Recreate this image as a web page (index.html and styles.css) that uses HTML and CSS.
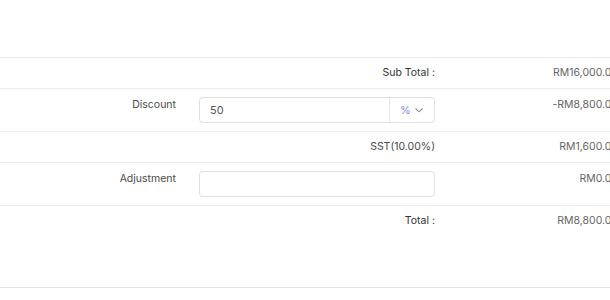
FILE: index.html
```html
<!DOCTYPE html>
<html lang="en">
<head>
  <meta charset="UTF-8" />
  <meta name="viewport" content="width=device-width, initial-scale=1.0" />
  <title>Totals</title>
  <link rel="stylesheet" href="styles.css">
</head>
<body>
  <section class="totals">
    <div class="row">
      <div class="label wide strong">Sub Total :</div>
      <div class="value">RM16,000.00</div>
    </div>

    <div class="row tall">
      <div class="label">Discount</div>
      <div class="field">
        <div class="input-group">
          <input class="input" type="text" value="50">
          <div class="append">
            <span class="unit">%</span>
            <svg class="chevron" width="10" height="10" viewBox="0 0 10 10">
              <path d="M1.5 3.5 L5 6.8 L8.5 3.5" fill="none" stroke="#8a8f99" stroke-width="1.1"/>
            </svg>
          </div>
        </div>
      </div>
      <div class="value">-RM8,800.00</div>
    </div>

    <div class="row">
      <div class="label wide">SST(10.00%)</div>
      <div class="value">RM1,600.00</div>
    </div>

    <div class="row tall">
      <div class="label">Adjustment</div>
      <div class="field">
        <div class="input-group">
          <input class="input" type="text" value="">
        </div>
      </div>
      <div class="value">RM0.00</div>
    </div>

    <div class="row last">
      <div class="label wide strong">Total :</div>
      <div class="value">RM8,800.00</div>
    </div>
  </section>
</body>
</html>
```

FILE: styles.css
```css
html, body {
  margin: 0;
  background: #fff;
  overflow: hidden;
}
body {
  font-family: Inter, "Noto Sans", sans-serif;
  font-size: 10.5px;
  color: #555;
}
.totals {
  width: 618px;
  margin-top: 57px;
  border-top: 1px solid #ececec;
}
.row {
  display: grid;
  grid-template-columns: 176px 236px 1fr;
  column-gap: 23px;
  padding: 7px 0;
  line-height: 16px;
  border-bottom: 1px solid #ececec;
}
.row.tall {
  padding: 8px 0;
}
.row.last {
  padding-bottom: 58px;
  border-bottom: 1px solid #e6e6e6;
}
.label {
  text-align: right;
  color: #4a4a4a;
}
.label.wide {
  grid-column: 1 / 3;
}
.label.strong {
  color: #333;
}
.value {
  text-align: right;
  color: #666;
  white-space: nowrap;
}
.tall .label,
.tall .value {
  padding-top: 0;
}
.input-group {
  display: flex;
  height: 26px;
  border: 1px solid #dcdfe6;
  border-radius: 4px;
  box-sizing: border-box;
  overflow: hidden;
}
.input {
  flex: 1;
  min-width: 0;
  border: none;
  outline: none;
  padding: 0 10px;
  font-family: inherit;
  font-size: 11px;
  color: #555;
  background: transparent;
}
.append {
  width: 44px;
  border-left: 1px solid #e4e7ed;
  display: flex;
  align-items: center;
  justify-content: center;
  gap: 3px;
}
.unit {
  color: #7f86e6;
  font-size: 11px;
}
.chevron {
  display: block;
}
```
